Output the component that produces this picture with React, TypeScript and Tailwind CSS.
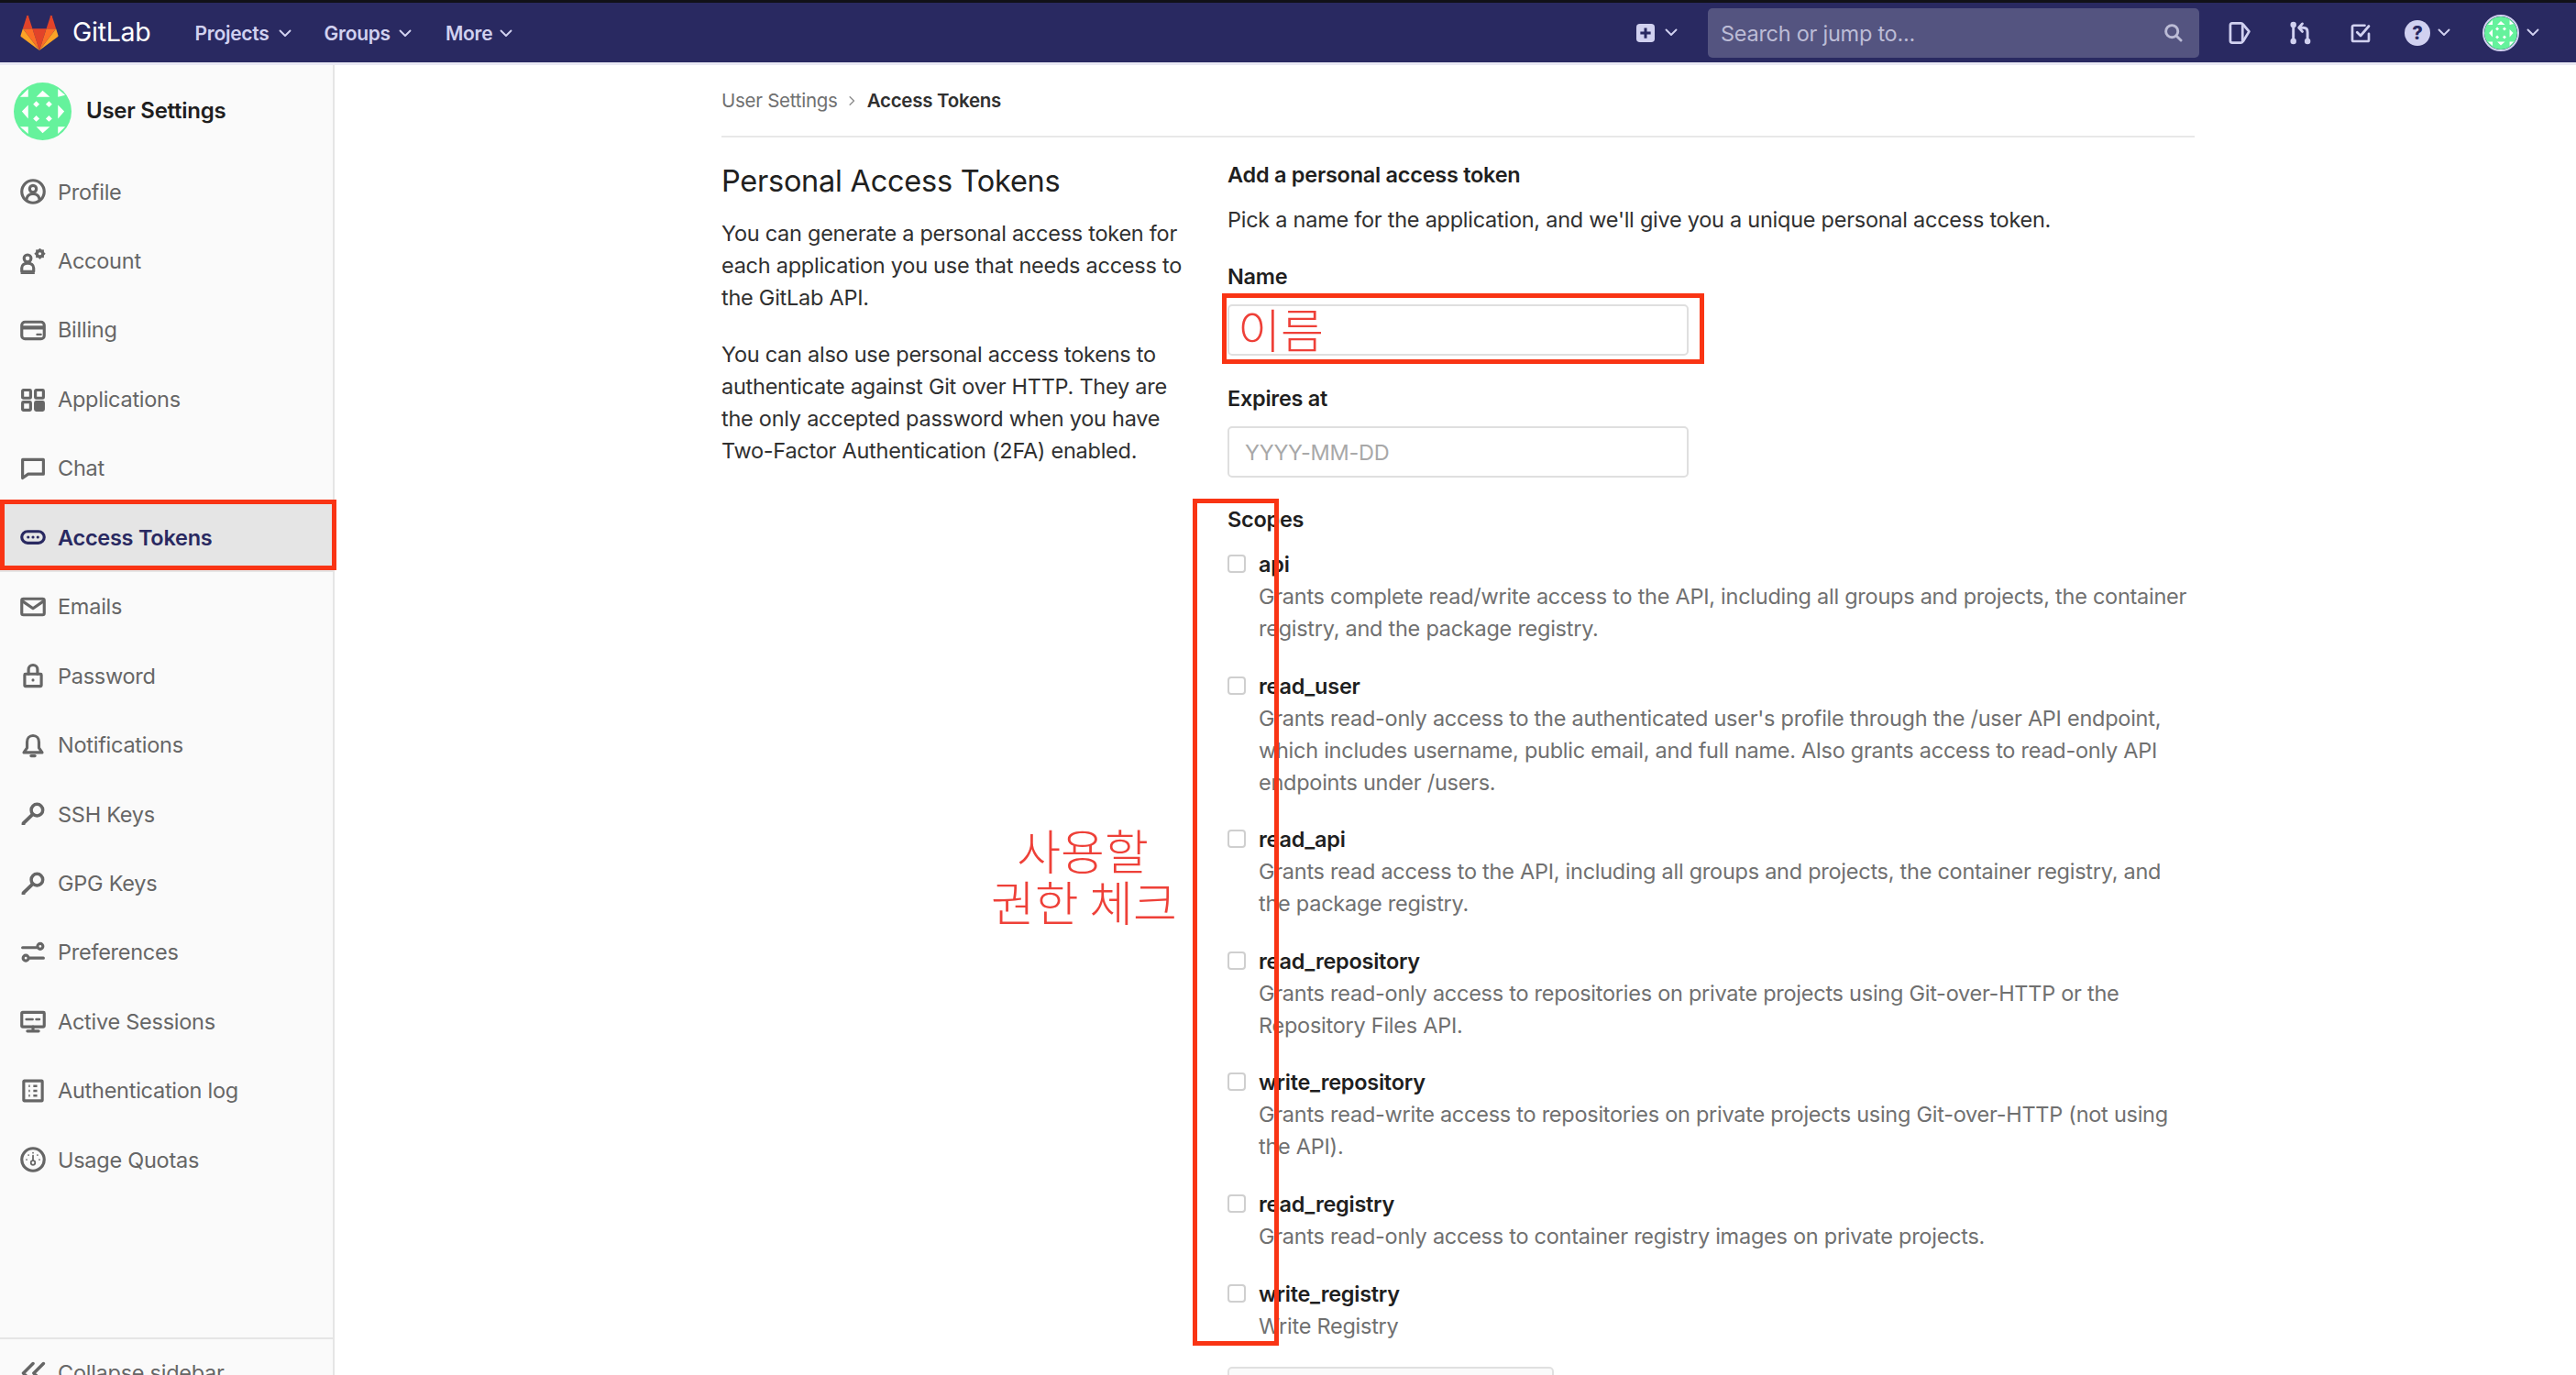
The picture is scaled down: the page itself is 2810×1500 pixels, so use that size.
import React from "react";

type IconProps = { className?: string };

const Svg = ({ className, children }: IconProps & { children: React.ReactNode }) => (
  <svg viewBox="0 0 16 16" fill="none" stroke="currentColor" strokeWidth={1.8} strokeLinecap="round" strokeLinejoin="round" className={className}>
    {children}
  </svg>
);

const ProfileIcon = (p: IconProps) => (
  <Svg {...p}>
    <circle cx="8" cy="8" r="7" />
    <circle cx="8" cy="6.3" r="2.1" />
    <path d="M3.9 13c.3-2.4 2-3.6 4.1-3.6s3.8 1.2 4.1 3.6" />
  </Svg>
);
const AccountIcon = (p: IconProps) => (
  <Svg {...p}>
    <circle cx="4.6" cy="6.2" r="2.2" />
    <path d="M1 14.4h7.4v-2.2c0-1.800-1.600-3-3.700-3S1 10.400 1 12.200z" />
    <path d="M.8 15.500h7.800" strokeWidth={1} />
    <g fill="currentColor" stroke="none">
      <rect x="9.800" y=".8" width="5" height="5" />
      <rect x="9.800" y=".8" width="5" height="5" transform="rotate(45 12.300 3.300)" />
      <circle cx="12.300" cy="3.300" r=".9" fill="#fafafa" />
    </g>
  </Svg>
);
const BillingIcon = (p: IconProps) => (
  <Svg {...p}>
    <rect x="1" y="3" width="14" height="10.500" rx="2" />
    <path d="M1.500 6.500h13" strokeWidth={2.400} strokeLinecap="butt" />
    <path d="M10.500 10.800h2.500" strokeWidth={1.200} />
  </Svg>
);
const AppsIcon = (p: IconProps) => (
  <Svg {...p}>
    <rect x="1.500" y="2" width="5" height="5" rx=".5" />
    <rect x="9.500" y="2" width="5" height="5" rx=".5" />
    <rect x="1.500" y="9.500" width="5" height="5" rx=".5" />
    <rect x="9.500" y="9.500" width="5" height="5" rx=".5" fill="currentColor" />
  </Svg>
);
const ChatIcon = (p: IconProps) => (
  <Svg {...p}>
    <path d="M1.500 2.500h13v9H5l-3.500 2.500z" />
  </Svg>
);
const TokenIcon = (p: IconProps) => (
  <Svg {...p}>
    <rect x="1" y="4.400" width="14" height="7.200" rx="3.600" />
    <path d="M5 8h.01M8 8h.01M11 8h.01" />
  </Svg>
);
const EmailIcon = (p: IconProps) => (
  <Svg {...p}>
    <rect x="1" y="3" width="14" height="10" rx="1" />
    <path d="M1.500 4.500 8 9l6.500-4.500" />
  </Svg>
);
const LockIcon = (p: IconProps) => (
  <Svg {...p}>
    <rect x="2.800" y="7" width="10.400" height="7.600" rx=".5" />
    <path d="M5.200 7V4.200a2.800 2.800 0 0 1 5.600 0V7" />
    <path d="M8 10.800h.01" />
  </Svg>
);
const BellIcon = (p: IconProps) => (
  <Svg {...p}>
    <path d="M8 2C5.700 2 4.300 3.800 4.300 6v3.600L2.300 12.500h11.400l-2-2.900V6C11.700 3.800 10.300 2 8 2z" />
    <path d="M6.800 14.600h2.400" />
  </Svg>
);
const KeyIcon = (p: IconProps) => (
  <Svg {...p}>
    <circle cx="10.500" cy="5.500" r="3.600" strokeWidth={2} />
    <path d="M7.800 8.200 2 13.800v1" strokeWidth={2.200} strokeLinecap="butt" />
  </Svg>
);
const PreferencesIcon = (p: IconProps) => (
  <Svg {...p}>
    <path d="M1.500 5h8.500M6 11.500h8.500" />
    <circle cx="12.500" cy="4.200" r="1.700" />
    <circle cx="3.500" cy="11.500" r="1.700" />
  </Svg>
);
const SessionsIcon = (p: IconProps) => (
  <Svg {...p}>
    <rect x="1" y="2.500" width="14" height="9" rx=".5" />
    <path d="M3.800 6.800h4M10 6.800h2" strokeWidth={1.400} />
    <path d="M8 11.500v2.500M4.500 14.200h7" />
  </Svg>
);
const LogIcon = (p: IconProps) => (
  <Svg {...p}>
    <rect x="2.200" y="1.800" width="11.600" height="12.400" rx=".4" />
    <path d="M5.300 5h.8M8.200 5h2.400M5.300 8h.8M8.200 8h2.400M5.300 11h.8M8.200 11h2.400" strokeWidth={1.300} strokeLinecap="butt" />
  </Svg>
);
const QuotaIcon = (p: IconProps) => (
  <Svg {...p}>
    <circle cx="8" cy="8" r="7" />
    <circle cx="8" cy="10" r="1.300" strokeWidth={1} />
    <path d="M8 8.700V5.500" strokeWidth={1} />
    <path d="M4 8h.01M12 8h.01M5.200 5.200h.01M10.800 5.200h.01M8 3.800h.01" strokeWidth={1} />
  </Svg>
);
const CollapseIcon = (p: IconProps) => (
  <Svg {...p}>
    <path d="M8 2 2 8l6 6M14.500 2l-6 6 6 6" strokeWidth={2} />
  </Svg>
);

const Chevron = ({ className }: IconProps) => (
  <svg viewBox="0 0 14 9" fill="none" stroke="currentColor" strokeWidth={1.900} strokeLinecap="round" strokeLinejoin="round" className={className}>
    <path d="M1.500 1.500 7 7l5.500-5.500" />
  </svg>
);

const Logo = () => (
  <svg viewBox="0 0 36 34" className="w-[42px] h-[39px]">
    <path d="M18 34 24.600 13.200H11.400z" fill="#e24329" />
    <path d="M18 34 11.400 13.200H2.200z" fill="#fc6d26" />
    <path d="M2.200 13.200.2 19.600c-.2.6 0 1.200.5 1.500L18 34z" fill="#fca326" />
    <path d="M2.200 13.200h9.200L7.400 1c-.2-.6-1.100-.6-1.300 0z" fill="#e24329" />
    <path d="M18 34 24.600 13.200h9.200z" fill="#fc6d26" />
    <path d="M33.800 13.200l2 6.400c.2.6 0 1.200-.5 1.500L18 34z" fill="#fca326" />
    <path d="M33.800 13.200h-9.200L28.600 1c.2-.6 1.100-.6 1.300 0z" fill="#e24329" />
  </svg>
);

const Identicon = ({ className }: IconProps) => (
  <svg viewBox="-32 -32 64 64" className={className}>
    <circle r="32" fill="#65f29c" />
    <g fill="#ffffff">
      <path d="M0-23-7-16H8zM0 24-7 17H8zM-23 0-16-7V8zM24 0 17-7V8z" />
      <path d="M-25-16-16-25V-16zM25-18 17-25V-16zM-25 17H-16V25zM25 17H17V25z" />
      <path d="M-7-11.500-3.500-8-7-4.500-10.500-8zM7-11.500 10.500-8 7-4.500 3.500-8zM-7 4.500-3.500 8-7 11.500-10.500 8zM7 4.500 10.500 8 7 11.500 3.500 8z" />
    </g>
  </svg>
);

const navItems = [
  { label: "Profile", Icon: ProfileIcon },
  { label: "Account", Icon: AccountIcon },
  { label: "Billing", Icon: BillingIcon },
  { label: "Applications", Icon: AppsIcon },
  { label: "Chat", Icon: ChatIcon },
  { label: "Access Tokens", Icon: TokenIcon, active: true },
  { label: "Emails", Icon: EmailIcon },
  { label: "Password", Icon: LockIcon },
  { label: "Notifications", Icon: BellIcon },
  { label: "SSH Keys", Icon: KeyIcon },
  { label: "GPG Keys", Icon: KeyIcon },
  { label: "Preferences", Icon: PreferencesIcon },
  { label: "Active Sessions", Icon: SessionsIcon },
  { label: "Authentication log", Icon: LogIcon },
  { label: "Usage Quotas", Icon: QuotaIcon },
];

const scopes = [
  {
    name: "api",
    lines: [
      "Grants complete read/write access to the API, including all groups and projects, the container",
      "registry, and the package registry.",
    ],
  },
  {
    name: "read_user",
    lines: [
      "Grants read-only access to the authenticated user's profile through the /user API endpoint,",
      "which includes username, public email, and full name. Also grants access to read-only API",
      "endpoints under /users.",
    ],
  },
  {
    name: "read_api",
    lines: [
      "Grants read access to the API, including all groups and projects, the container registry, and",
      "the package registry.",
    ],
  },
  {
    name: "read_repository",
    lines: [
      "Grants read-only access to repositories on private projects using Git-over-HTTP or the",
      "Repository Files API.",
    ],
  },
  {
    name: "write_repository",
    lines: [
      "Grants read-write access to repositories on private projects using Git-over-HTTP (not using",
      "the API).",
    ],
  },
  { name: "read_registry", lines: ["Grants read-only access to container registry images on private projects."] },
  { name: "write_registry", lines: ["Write Registry"] },
];

const TopBar = () => (
  <header className="h-[71px] shrink-0 border-t-[3px] border-b-[3px] border-t-[#111118] border-b-[#e9e9f4] bg-[#292961] flex items-center text-[#d1d1f0]">
    <div className="ml-[22px] flex items-center gap-[15px]">
      <Logo />
      <span className="text-[28.5px] leading-none text-white">GitLab</span>
    </div>
    <nav className="ml-[48px] flex items-center text-[21px] font-semibold pt-[2px]">
      <span>Projects</span>
      <Chevron className="ml-[10px] w-[14px] h-[9px]" />
      <span className="ml-[36px]">Groups</span>
      <Chevron className="ml-[9px] w-[14px] h-[9px]" />
      <span className="ml-[37px]">More</span>
      <Chevron className="ml-[8px] w-[14px] h-[9px]" />
    </nav>
    <div className="ml-auto flex items-center">
      <svg viewBox="0 0 16 16" className="w-[20px] h-[20px]">
        <rect width="16" height="16" rx="3" fill="#d1d1f0" />
        <path d="M8 3.500v9M3.500 8h9" stroke="#292961" strokeWidth="2.400" />
      </svg>
      <Chevron className="ml-[11px] w-[14px] h-[9px]" />
      <div className="ml-[33px] w-[536px] h-[54px] rounded-[5px] bg-[#545480] flex items-center pl-[14px] pr-[18px]">
        <span className="text-[23.5px] text-[#bcbcd6] pt-[2px]">Search or jump to...</span>
        <svg viewBox="0 0 16 16" fill="none" stroke="#bcbcd6" strokeWidth={2.200} strokeLinecap="round" className="ml-auto w-[21px] h-[21px]">
          <circle cx="7" cy="7" r="5" />
          <path d="M11 11l3.500 3.500" />
        </svg>
      </div>
      <svg viewBox="0 0 16 16" fill="none" stroke="currentColor" strokeWidth={1.700} strokeLinejoin="round" className="ml-[31px] w-[26px] h-[26px]">
        <path d="M3 1.500h6c.6 0 1 .3 1.400.8l4 4.700-4 6.500c-.3.6-.8 1-1.400 1H3c-.8 0-1.200-.4-1.200-1.200V2.700c0-.8.4-1.200 1.200-1.200z" />
        <path d="M10 2.500v11" />
      </svg>
      <svg viewBox="0 0 16 16" fill="none" stroke="currentColor" strokeWidth={1.800} strokeLinecap="round" strokeLinejoin="round" className="ml-[40px] w-[26px] h-[26px]">
        <path d="M3.500 3v10M13 13V7.500c0-1.800-1-3-2.700-3H8" />
        <path d="M9.500 1.800 7.200 4.500 9.500 7" />
        <circle cx="3.500" cy="2.500" r="1.100" fill="currentColor" />
        <circle cx="3.500" cy="13.500" r="1.100" fill="currentColor" />
        <circle cx="13" cy="13.500" r="1.100" fill="currentColor" />
      </svg>
      <svg viewBox="0 0 16 16" fill="none" stroke="currentColor" strokeWidth={1.800} strokeLinecap="round" strokeLinejoin="round" className="ml-[41px] w-[24px] h-[24px]">
        <path d="M14 8.500V13a1 1 0 0 1-1 1H3a1 1 0 0 1-1-1V3.500a1 1 0 0 1 1-1h8" />
        <path d="M5.500 7.500 8 10l6-7" />
      </svg>
      <div className="ml-[36px] w-[28px] h-[28px] rounded-full bg-[#d1d1f0] flex items-center justify-center text-[20px] font-extrabold text-[#292961]">?</div>
      <Chevron className="ml-[8px] w-[14px] h-[9px]" />
      <Identicon className="ml-[35px] w-[40px] h-[40px] rounded-full border-2 border-[#d1d1f0]" />
      <Chevron className="ml-[8px] mr-[40px] w-[14px] h-[9px]" />
    </div>
  </header>
);

const Sidebar = () => (
  <aside className="w-[365px] h-[1463px] shrink-0 border-r-2 border-[#e5e5e5] bg-[#fafafa] flex flex-col">
    <div className="h-[100.5px] shrink-0 pl-[15px] flex items-center gap-[16px]">
      <Identicon className="w-[63px] h-[63px]" />
      <span className="text-[24px] font-semibold text-[#1f1f1f]">User Settings</span>
    </div>
    <ul>
      {navItems.map(({ label, Icon, active }) => (
        <li
          key={label}
          className={
            active
              ? "h-[75.45px] pl-[22px] flex items-center gap-[13px] bg-[#e5e5e5] text-[#292961] font-semibold"
              : "h-[75.45px] pl-[22px] flex items-center gap-[13px] text-[#666666]"
          }
        >
          <Icon className="w-[28px] h-[28px] shrink-0" />
          <span>{label}</span>
        </li>
      ))}
    </ul>
    <div className="mt-auto h-[75px] shrink-0 border-t-2 border-[#e5e5e5] pl-[22px] flex items-center gap-[13px] text-[#666666]">
      <CollapseIcon className="w-[28px] h-[28px]" />
      <span>Collapse sidebar</span>
    </div>
  </aside>
);

const TextField = ({ placeholder }: { placeholder?: string }) => (
  <input
    placeholder={placeholder}
    className="block w-[503px] h-[56px] rounded-[5px] border-2 border-[#dfdfdf] bg-white px-[17px] placeholder:text-[#a8a8a8]"
  />
);

const Content = () => (
  <main className="ml-[422px] w-[1607px] leading-[35px] text-[#303030]">
    <div className="h-[79px] border-b-2 border-[#e8e8e8] flex items-center">
      <span className="text-[20.5px] text-[#707070]">User Settings</span>
      <Chevron className="ml-[10px] w-[11px] h-[8px] -rotate-90 text-[#909090]" />
      <span className="ml-[11px] text-[20.5px] font-semibold text-[#303030]">Access Tokens</span>
    </div>
    <div className="flex">
      <section className="w-[552px] shrink-0 pt-[27px]">
        <h4 className="text-[32.5px] leading-[42px] text-[#202020]">Personal Access Tokens</h4>
        <p className="mt-[18px] w-[510px]">
          You can generate a personal access token for each application you use that needs access to the GitLab API.
        </p>
        <p className="mt-[27px] w-[510px]">
          You can also use personal access tokens to authenticate against Git over HTTP. They are the only accepted
          password when you have Two-Factor Authentication (2FA) enabled.
        </p>
      </section>
      <section className="flex-1 pt-[23px]">
        <h5 className="font-semibold text-[#1f1f1f]">Add a personal access token</h5>
        <p className="mt-[14px]">Pick a name for the application, and we'll give you a unique personal access token.</p>
        <label className="block mt-[27px] font-semibold text-[#1f1f1f]">Name</label>
        <div className="mt-[13px]">
          <TextField />
        </div>
        <label className="block mt-[29px] font-semibold text-[#1f1f1f]">Expires at</label>
        <div className="mt-[13px]">
          <TextField placeholder="YYYY-MM-DD" />
        </div>
        <label className="block mt-[28px] font-semibold text-[#1f1f1f]">Scopes</label>
        <div className="mt-[14px] flex flex-col gap-[27.6px]">
          {scopes.map((scope) => (
            <div key={scope.name} className="flex items-start">
              <span className="mt-[7px] w-[20px] h-[20px] shrink-0 rounded-[4px] border-2 border-[#cfcfcf] bg-white" />
              <div className="ml-[14px]">
                <div className="font-semibold text-[#1f1f1f]">{scope.name}</div>
                {scope.lines.map((line) => (
                  <div key={line} className="text-[#707070] whitespace-nowrap">
                    {line}
                  </div>
                ))}
              </div>
            </div>
          ))}
        </div>
        <button className="mt-[27px] block w-[356px] h-[60px] rounded-[5px] border-2 border-[#e0e0e0] bg-[#fafafa] text-[#303030]">
          Create personal access token
        </button>
      </section>
    </div>
  </main>
);

export default function App() {
  return (
    <div className="relative w-[2810px] h-[1500px] overflow-hidden bg-white font-[Inter,sans-serif] text-[23.5px] tracking-[-0.26px] flex flex-col">
      <TopBar />
      <div className="flex items-start">
        <Sidebar />
        <Content />
      </div>

      {/* red marks drawn over the screenshot */}
      <div className="absolute left-0 top-[545px] w-[367px] h-[77px] border-[5px] border-[#f93414]" />
      <div className="absolute left-[1333px] top-[320px] w-[526px] h-[77px] border-[5px] border-[#f93414]" />
      <div className="absolute left-[1301px] top-[544px] w-[94px] h-[924px] border-[5px] border-[#f93414]" />
      <span className="absolute left-[1350px] top-[323px] text-[51px] leading-[70px] tracking-normal font-light text-[#ee4038] font-['Noto_Sans_CJK_KR',sans-serif]">
        이름
      </span>
      <div className="absolute left-[1081px] top-[899px] w-[200px] text-center text-[52px] leading-[56px] tracking-normal font-light text-[#ee4038] font-['Noto_Sans_CJK_KR',sans-serif]">
        <div>사용할</div>
        <div className="whitespace-nowrap">권한 체크</div>
      </div>
    </div>
  );
}
